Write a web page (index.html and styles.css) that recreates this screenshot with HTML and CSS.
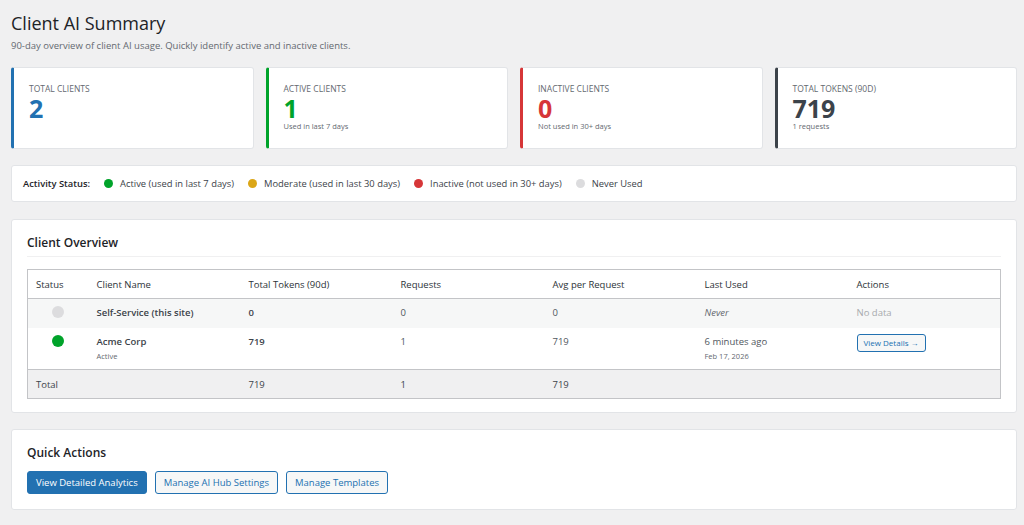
FILE: index.html
```html
<!DOCTYPE html>
<html lang="en">
<head>
  <meta charset="UTF-8" />
  <meta name="viewport" content="width=device-width, initial-scale=1.0"/>
  <title>Client AI Summary</title>
  <link rel="stylesheet" href="styles.css">
</head>
<body>

  <div class="wrap">
    <h1>Client AI Summary</h1>
    <p class="intro">90-day overview of client AI usage. Quickly identify active and inactive clients.</p>

    <div class="stats">
      <div class="stat stat-total">
        <div class="stat-label">Total Clients</div>
        <div class="stat-value">2</div>
      </div>
      <div class="stat stat-active">
        <div class="stat-label">Active Clients</div>
        <div class="stat-value">1</div>
        <div class="stat-sub">Used in last 7 days</div>
      </div>
      <div class="stat stat-inactive">
        <div class="stat-label">Inactive Clients</div>
        <div class="stat-value">0</div>
        <div class="stat-sub">Not used in 30+ days</div>
      </div>
      <div class="stat stat-tokens">
        <div class="stat-label">Total Tokens (90d)</div>
        <div class="stat-value">719</div>
        <div class="stat-sub">1 requests</div>
      </div>
    </div>

    <div class="legend">
      <strong>Activity Status:</strong>
      <span class="legend-item"><span class="dot dot-active"></span>Active (used in last 7 days)</span>
      <span class="legend-item"><span class="dot dot-moderate"></span>Moderate (used in last 30 days)</span>
      <span class="legend-item"><span class="dot dot-inactive"></span>Inactive (not used in 30+ days)</span>
      <span class="legend-item"><span class="dot dot-never"></span>Never Used</span>
    </div>

    <div class="panel overview">
      <h2 class="panel-title">Client Overview</h2>
      <table class="clients">
        <colgroup>
          <col class="col-status">
          <col>
          <col>
          <col>
          <col>
          <col>
          <col>
        </colgroup>
        <thead>
          <tr>
            <th>Status</th>
            <th>Client Name</th>
            <th>Total Tokens (90d)</th>
            <th>Requests</th>
            <th>Avg per Request</th>
            <th>Last Used</th>
            <th>Actions</th>
          </tr>
        </thead>
        <tbody>
          <tr class="alt">
            <td class="status"><span class="dot-lg dot-never"></span></td>
            <td><strong>Self-Service (this site)</strong></td>
            <td><strong>0</strong></td>
            <td>0</td>
            <td>0</td>
            <td><em class="muted">Never</em></td>
            <td><span class="no-data">No data</span></td>
          </tr>
          <tr>
            <td class="status"><span class="dot-lg dot-active"></span></td>
            <td><strong>Acme Corp</strong><div class="small">Active</div></td>
            <td><strong>719</strong></td>
            <td>1</td>
            <td>719</td>
            <td>6 minutes ago<div class="small">Feb 17, 2026</div></td>
            <td><a class="btn-small" href="#">View Details &rarr;</a></td>
          </tr>
        </tbody>
        <tfoot>
          <tr>
            <td colspan="2">Total</td>
            <td>719</td>
            <td>1</td>
            <td>719</td>
            <td></td>
            <td></td>
          </tr>
        </tfoot>
      </table>
    </div>

    <div class="panel quick">
      <h2 class="panel-title plain">Quick Actions</h2>
      <div class="actions">
        <a class="button button-primary" href="#">View Detailed Analytics</a>
        <a class="button" href="#">Manage AI Hub Settings</a>
        <a class="button" href="#">Manage Templates</a>
      </div>
    </div>
  </div>

</body>
</html>
```

FILE: styles.css
```css
body {
  margin: 0;
  font-family: "Open Sans", "Noto Sans", sans-serif;
  background-color: #f0f0f1;
  color: #3c434a;
  font-size: 10px;
}

.wrap {
  padding: 12px 7px 14px 11px;
}

h1 {
  margin: 0;
  font-size: 18px;
  line-height: 23px;
  font-weight: 400;
  color: #1d2327;
}

.intro {
  margin: 4px 0 0;
  font-size: 9.5px;
  line-height: 14px;
  color: #646970;
}

.stats {
  display: grid;
  grid-template-columns: repeat(4, 1fr);
  gap: 12px;
  margin-top: 14px;
}

.stat {
  background: #fff;
  border: 1px solid #e2e4e7;
  border-left: 3px solid #2271b1;
  border-radius: 3px;
  padding: 15px 15px 16px;
  min-height: 49px;
}

.stat-label {
  font-size: 8.5px;
  line-height: 12px;
  text-transform: uppercase;
  color: #646970;
}

.stat-value {
  font-size: 25px;
  line-height: 26px;
  font-weight: 700;
  color: #2271b1;
}

.stat-sub {
  font-size: 7.5px;
  line-height: 11px;
  color: #646970;
}

.stat-active { border-left-color: #00a32a; }
.stat-active .stat-value { color: #00a32a; }
.stat-inactive { border-left-color: #d63638; }
.stat-inactive .stat-value { color: #d63638; }
.stat-tokens { border-left-color: #3c434a; }
.stat-tokens .stat-value { color: #3c434a; }

.legend {
  display: flex;
  align-items: center;
  gap: 14px;
  margin-top: 16px;
  background: #fff;
  border: 1px solid #e2e4e7;
  border-radius: 3px;
  padding: 0 11px;
  height: 35px;
  font-size: 9.4px;
  color: #3c434a;
}

.legend strong {
  color: #1d2327;
  font-weight: 600;
}

.legend-item {
  display: flex;
  align-items: center;
}

.dot {
  display: inline-block;
  width: 9px;
  height: 9px;
  border-radius: 50%;
  margin-right: 7px;
}

.dot-active { background: #00a32a; }
.dot-moderate { background: #dba617; }
.dot-inactive { background: #d63638; }
.dot-never { background: #dcdcde; }

.panel {
  margin-top: 16px;
  background: #fff;
  border: 1px solid #e2e4e7;
  border-radius: 3px;
  padding: 15px 15px 14px;
}

.panel.overview {
  margin-top: 17px;
  padding-bottom: 13px;
}

.panel.quick {
  padding-bottom: 15px;
}

.panel-title {
  margin: 0 0 12px;
  padding-bottom: 6px;
  border-bottom: 1px solid #f0f0f1;
  font-size: 12px;
  line-height: 15px;
  font-weight: 600;
  color: #1d2327;
}

.panel-title.plain {
  border-bottom: none;
  padding-bottom: 0;
  margin-bottom: 11px;
}

.clients {
  width: 100%;
  table-layout: fixed;
  border-collapse: collapse;
  border: 1px solid #c3c4c7;
  font-size: 9.5px;
}

.clients .col-status {
  width: 61px;
}

.clients th,
.clients td {
  text-align: left;
  vertical-align: top;
  padding: 7px 8px;
  line-height: 13px;
}

.clients th {
  font-weight: 400;
  color: #2c3338;
  padding-top: 8px;
  padding-bottom: 7px;
  border-bottom: 1px solid #c3c4c7;
}

.clients tbody td {
  color: #50575e;
}

.clients tbody td strong {
  font-weight: 600;
  color: #3c434a;
}

.clients tr.alt td {
  background: #f6f7f7;
}

.clients td.status {
  text-align: center;
}

.dot-lg {
  display: inline-block;
  width: 12px;
  height: 12px;
  border-radius: 50%;
}

.small {
  font-size: 7.5px;
  line-height: 11px;
  margin-top: 3px;
  color: #646970;
}

.muted {
  color: #646970;
}

.no-data {
  color: #a7aaad;
}

.btn-small {
  display: inline-block;
  font-size: 8px;
  line-height: 16px;
  padding: 0 6px;
  margin-top: -1px;
  color: #2271b1;
  background: #f6f7f7;
  border: 1px solid #2271b1;
  border-radius: 3px;
  text-decoration: none;
}

.clients tfoot td {
  background: #f0f0f1;
  border-top: 1px solid #c3c4c7;
  color: #3c434a;
  padding-top: 8px;
  padding-bottom: 7px;
}

.actions {
  display: flex;
  gap: 8px;
}

.button {
  display: inline-block;
  font-size: 9.5px;
  line-height: 21px;
  padding: 0 8px;
  color: #2271b1;
  background: #f6f7f7;
  border: 1px solid #2271b1;
  border-radius: 3px;
  text-decoration: none;
}

.button-primary {
  background: #2271b1;
  color: #fff;
}
```
